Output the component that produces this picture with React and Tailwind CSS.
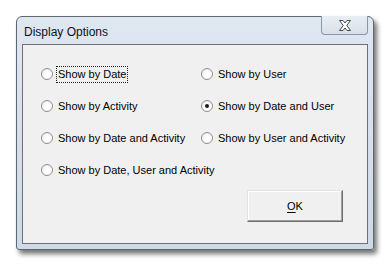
import React, { useState } from 'react';

const options = [
  ['Show by Date', 'Show by User'],
  ['Show by Activity', 'Show by Date and User'],
  ['Show by Date and Activity', 'Show by User and Activity'],
  ['Show by Date, User and Activity', null],
];

const Radio = ({ label, checked, focused, onSelect }) => (
  <button onClick={onSelect} className="flex items-center h-[18px] text-left whitespace-nowrap">
    <span className="w-[12px] h-[12px] rounded-full border border-[#8f8f8f] bg-[radial-gradient(circle_at_60%_60%,#ffffff_40%,#e3e3e3_100%)] flex items-center justify-center shrink-0">
      {checked && <span className="w-[4px] h-[4px] rounded-full bg-[#1a1a1a]" />}
    </span>
    <span
      className={`ml-[4px] px-[1px] leading-[15px] ${
        focused ? 'outline outline-1 outline-dotted outline-[#222]' : ''
      }`}
    >
      {label}
    </span>
  </button>
);

const CloseGlyph = () => (
  <svg width="14" height="11" viewBox="0 0 14 11">
    <path
      d="M1.5 0.5 H5 L7 3 L9 0.5 H12.5 L8.8 5.5 L12.5 10.5 H9 L7 8 L5 10.5 H1.5 L5.2 5.5 Z"
      fill="#ffffff"
      stroke="#4a4a4a"
      strokeWidth="1"
      strokeLinejoin="round"
    />
  </svg>
);

export default function App() {
  const [selected, setSelected] = useState('Show by Date and User');

  return (
    <div className="w-[391px] h-[268px] bg-white pt-[16px] pl-[16px] font-['Liberation_Sans',Arial,sans-serif] text-[11px] text-black">
      <div className="w-[358px] h-[234px] rounded-t-[6px] rounded-b-[3px] border border-[#5e6670] bg-[linear-gradient(#dfe7f1,#cdd9e7)] shadow-[3px_4px_5px_rgba(0,0,0,0.55)] flex flex-col px-[5px] pb-[5px]">
        {/* Title bar */}
        <div className="h-[27px] flex items-start justify-between">
          <span className="mt-[6px] ml-[2px] text-[12px] text-[#111]">Display Options</span>
          <div className="w-[47px] h-[19px] -mt-px border border-t-0 border-[#8d97a3] rounded-b-[4px] bg-[linear-gradient(#e9eef4,#d7e0ea)] flex items-center justify-center">
            <CloseGlyph />
          </div>
        </div>

        {/* Client area */}
        <div className="flex-1 bg-[#f0f0f0] border border-[#707070]">
          <div className="pt-[20px] pl-[18px] flex flex-col gap-[14px]">
            {options.map((row, i) => (
              <div key={i} className="grid grid-cols-[160px_1fr]">
                <Radio
                  label={row[0]}
                  checked={selected === row[0]}
                  focused={i === 0}
                  onSelect={() => setSelected(row[0])}
                />
                {row[1] && (
                  <Radio
                    label={row[1]}
                    checked={selected === row[1]}
                    onSelect={() => setSelected(row[1])}
                  />
                )}
              </div>
            ))}
          </div>
          <div className="flex justify-end mt-[11px] pr-[24px]">
            <button className="w-[96px] h-[32px] bg-[#f0f0f0] border border-t-[#e3e3e3] border-l-[#e3e3e3] border-r-[#6e6e6e] border-b-[#6e6e6e] shadow-[inset_-1px_-1px_0_#a0a0a0,inset_1px_1px_0_#ffffff] text-[11px]">
              <span className="underline underline-offset-2">O</span>K
            </button>
          </div>
        </div>
      </div>
    </div>
  );
}
